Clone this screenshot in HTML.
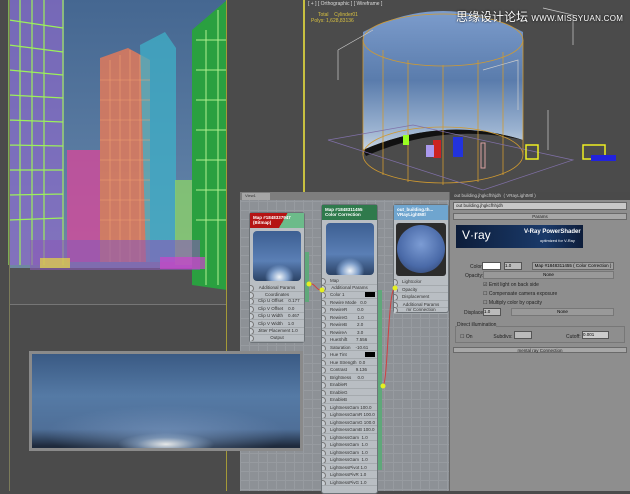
<!DOCTYPE html>
<html><head><meta charset="utf-8"><style>
*{margin:0;padding:0;box-sizing:border-box}
body{width:630px;height:491px;overflow:hidden;background:#4b4b4b;position:relative;font-family:"Liberation Sans",sans-serif}
.a{position:absolute}
.t{font-size:5px;color:#222;white-space:nowrap}
.node{position:absolute;background:#b9bec3;border:1px solid #6d7378;border-radius:3px}
.row{position:absolute;left:0;right:0;height:7.5px;border-bottom:1px solid #a5aaae;font-size:4.5px;color:#333;padding-left:8px;line-height:7px;white-space:nowrap;overflow:hidden}
.row:before{content:"";position:absolute;left:-3px;top:1px;width:5px;height:5px;border-radius:50%;background:#c8cdd2;border:1px solid #777}
</style></head><body>
<!-- left viewport -->
<div class="a" style="left:9px;top:0;width:218px;height:305px;background:linear-gradient(#456791,#5d7ea4 60%,#6f88a2 85%)"></div>
<div class="a" style="left:9px;top:268px;width:218px;height:37px;background:#525252"></div>
<svg class="a" style="left:0;top:0" width="230" height="305">
<rect x="9" y="0" width="55" height="265" fill="#8a6ac8" opacity=".7"/>
<g stroke="#9cf05a" stroke-width="1.2" fill="none">
<path d="M9 0V265M63 0V265M9 20L63 28M9 45L63 52M9 70L63 75M9 95L63 98M9 120L63 122M9 145L63 146M9 170L63 170M9 195L63 194M9 220L63 218M20 0V265M32 0V265M44 0V265"/></g>
<rect x="67" y="150" width="33" height="112" fill="#d24a9a" opacity=".8"/>
<polygon points="100,58 128,48 150,60 150,262 100,262" fill="#e07a5a" opacity=".85"/>
<polygon points="140,45 165,32 176,48 176,262 146,262" fill="#3fb0c8" opacity=".75"/>
<g stroke="#f0a070" stroke-width=".6"><path d="M100 80H150M100 100H150M100 120H150M100 140H150M100 160H150M100 180H150M100 200H150M100 220H150M110 60V262M120 55V262M130 50V262M140 55V262"/></g>
<rect x="175" y="180" width="18" height="85" fill="#8ad06a" opacity=".8"/>
<polygon points="192,30 227,0 227,290 192,285" fill="#2aa040"/>
<g stroke="#b0f090" stroke-width="1"><path d="M196 40H227M196 70H227M196 100H227M196 130H227M196 160H227M196 190H227M196 220H227M206 30V285M218 10V285"/></g>
<rect x="30" y="240" width="170" height="30" fill="#8a5ab8" opacity=".6"/>
<rect x="160" y="257" width="45" height="12" fill="#cc44cc" opacity=".7"/>
<rect x="40" y="258" width="30" height="10" fill="#e8d840" opacity=".7"/>
<line x1="9" y1="305" x2="227" y2="305" stroke="#9a9a9a"/>
</svg>
<div class="a" style="left:9px;top:0;width:1px;height:491px;background:#7b7b5a"></div>
<div class="a" style="left:226px;top:0;width:1px;height:491px;background:#a49a38"></div>
<!-- top right viewport -->
<div class="a" style="left:303px;top:0;width:2px;height:193px;background:#c8c040"></div>
<div class="a t" style="left:308px;top:1px;color:#ddd;font-size:5px">[ + ] [ Orthographic ] [ Wireframe ]</div>
<div class="a t" style="left:311px;top:12px;color:#d8c040;font-size:5px;line-height:6px">&nbsp;&nbsp;&nbsp;&nbsp;&nbsp;Total&nbsp;&nbsp;&nbsp;&nbsp;Cylinder01<br>Polys: 1,628,83136</div>
<svg class="a" style="left:303px;top:0" width="327" height="193">
<defs><linearGradient id="cy" x1="0" y1="0" x2="0" y2="1"><stop offset="0" stop-color="#7c9ccc"/><stop offset=".5" stop-color="#5a7cac"/><stop offset=".85" stop-color="#9ab2d0"/><stop offset="1" stop-color="#c8d4e0"/></linearGradient></defs>
<path d="M60 32 Q140 -10 220 32 V140 Q140 115 60 150Z" fill="url(#cy)"/>
<path d="M60 150 Q140 115 220 140 Q140 122 63 156Z" fill="#111"/>
<g fill="none" stroke="#d09a30" stroke-width=".8"><ellipse cx="140" cy="40" rx="80" ry="26"/><ellipse cx="140" cy="155" rx="80" ry="28"/><path d="M60 40V155M220 40V155M80 50V175M105 60V182M140 65V185M175 60V182M200 52V175"/></g>
<g stroke="#ccc" stroke-width=".7" fill="none"><path d="M35 50L70 30M35 50V80M180 70L215 60V110M240 8L270 15V45M245 110V150"/></g>
<path d="M25 140L110 125L270 160L180 190Z" fill="none" stroke="#8070a8" stroke-width=".7"/>
<rect x="100" y="135" width="6" height="10" fill="#9f2"/><rect x="130" y="140" width="8" height="18" fill="#cc2222"/><rect x="150" y="137" width="10" height="20" fill="#2233dd"/><rect x="123" y="145" width="8" height="12" fill="#aa99ee"/><rect x="178" y="143" width="4" height="25" fill="none" stroke="#d8a0a0"/><rect x="223" y="145" width="12" height="14" fill="none" stroke="#ee2" stroke-width="1.5"/><rect x="280" y="145" width="22" height="14" fill="none" stroke="#ee2" stroke-width="1.5"/><rect x="288" y="155" width="25" height="6" fill="#22d"/>
</svg>
<div class="a" style="left:456px;top:8px;color:#fff;font-size:12px;font-family:'Liberation Sans','Noto Sans CJK SC',sans-serif;white-space:nowrap;text-shadow:0 0 2px #000">思缘设计论坛 <span style="font-size:8px;letter-spacing:.3px">WWW.MISSYUAN.COM</span></div>
<!-- slate -->
<div class="a" style="left:240px;top:192px;width:210px;height:299px;background-color:#8d9196;background-image:linear-gradient(#979ba0 1px,transparent 1px),linear-gradient(90deg,#979ba0 1px,transparent 1px);background-size:9px 9px"></div>
<div class="a" style="left:240px;top:192px;width:210px;height:8px;background:#7e7e7e"></div>
<div class="a" style="left:242px;top:193px;width:28px;height:7px;background:#a6a6a6;font-size:4px;color:#333;padding-left:3px">View1</div>
<!-- node1 -->
<div class="node" style="left:249px;top:212px;width:56px;height:131px">
<div class="a" style="left:0;top:0;width:54px;height:15px;background:linear-gradient(120deg,#b51414 60%,#6cbb8a 60%);font-size:4.5px;color:#fff;padding:2px 3px;font-weight:bold;white-space:nowrap">Map #1848337947<br>(Bitmap)</div>
<div class="a" style="left:3px;top:18px;width:48px;height:50px;border-radius:4px;background:radial-gradient(ellipse 30% 25% at 55% 92%,#f0f4f8,#7c9cc8 60%,transparent),linear-gradient(#3d5f92,#5a7fb5 60%,#2b4265)"></div>
<div class="row" style="top:71px;text-align:center;padding:0">Additional Params</div>
<div class="row" style="top:78px;text-align:center;padding:0">Coordinates</div>
<div class="row" style="top:84px">Clip U Offset&nbsp;&nbsp;&nbsp;&nbsp;0.177</div>
<div class="row" style="top:92px">Clip V Offset&nbsp;&nbsp;&nbsp;&nbsp;0.0</div>
<div class="row" style="top:99px">Clip U Width&nbsp;&nbsp;&nbsp;&nbsp;0.467</div>
<div class="row" style="top:107px">Clip V Width&nbsp;&nbsp;&nbsp;&nbsp;1.0</div>
<div class="row" style="top:114px">Jitter Placement 1.0</div>
<div class="row" style="top:121px;text-align:center;padding:0">Output</div>
</div>
<div class="a" style="left:305px;top:252px;width:4px;height:50px;background:#5fa87a"></div>
<!-- node2 -->
<div class="node" style="left:321px;top:204px;width:57px;height:290px">
<div class="a" style="left:0;top:0;width:55px;height:15px;background:#2f7a4c;font-size:4.5px;color:#fff;padding:2px 3px;font-weight:bold;white-space:nowrap">Map #1848311455<br>Color Correction</div>
<div class="a" style="left:4px;top:18px;width:48px;height:52px;border-radius:4px;background:radial-gradient(ellipse 30% 25% at 50% 92%,#f0f4f8,#7c9cc8 60%,transparent),linear-gradient(#3d5f92,#5a7fb5 60%,#2b4265)"></div>
<div class="row" style="top:72px">Map</div>
<div class="row" style="top:79px;text-align:center;padding:0">Additional Params</div>
<div class="row" style="top:86px">Color 1</div><div class="row" style="top:93.5px">Rewire Mode&nbsp;&nbsp;&nbsp;0.0</div><div class="row" style="top:101px">RewireR&nbsp;&nbsp;&nbsp;&nbsp;&nbsp;&nbsp;&nbsp;&nbsp;0.0</div><div class="row" style="top:108.5px">RewireG&nbsp;&nbsp;&nbsp;&nbsp;&nbsp;&nbsp;&nbsp;&nbsp;1.0</div><div class="row" style="top:116px">RewireB&nbsp;&nbsp;&nbsp;&nbsp;&nbsp;&nbsp;&nbsp;&nbsp;2.0</div><div class="row" style="top:123.5px">RewireA&nbsp;&nbsp;&nbsp;&nbsp;&nbsp;&nbsp;&nbsp;&nbsp;3.0</div><div class="row" style="top:131px">HueShift&nbsp;&nbsp;&nbsp;&nbsp;&nbsp;&nbsp;&nbsp;7.556</div><div class="row" style="top:138.5px">Saturation&nbsp;&nbsp;&nbsp;&nbsp;-10.61</div><div class="row" style="top:146px">Hue Tint</div><div class="row" style="top:153.5px">Hue Strength&nbsp;&nbsp;0.0</div><div class="row" style="top:161px">Contrast&nbsp;&nbsp;&nbsp;&nbsp;&nbsp;&nbsp;&nbsp;9.136</div><div class="row" style="top:168.5px">Brightness&nbsp;&nbsp;&nbsp;&nbsp;&nbsp;0.0</div><div class="row" style="top:176px">EnableR</div><div class="row" style="top:183.5px">EnableG</div><div class="row" style="top:191px">EnableB</div><div class="row" style="top:198.5px">LightnessGam 100.0</div><div class="row" style="top:206px">LightnessGamR 100.0</div><div class="row" style="top:213.5px">LightnessGamG 100.0</div><div class="row" style="top:221px">LightnessGamB 100.0</div><div class="row" style="top:228.5px">LightnessGam&nbsp;&nbsp;1.0</div><div class="row" style="top:236px">LightnessGam&nbsp;&nbsp;1.0</div><div class="row" style="top:243.5px">LightnessGam&nbsp;&nbsp;1.0</div><div class="row" style="top:251px">LightnessGam&nbsp;&nbsp;1.0</div><div class="row" style="top:258.5px">LightnessPivot&nbsp;1.0</div><div class="row" style="top:266px">LightnessPivR 1.0</div><div class="row" style="top:273.5px">LightnessPivG 1.0</div>
<div class="a" style="left:43px;top:87px;width:10px;height:5px;background:#000"></div><div class="a" style="left:43px;top:147px;width:10px;height:5px;background:#000"></div>
</div>
<div class="a" style="left:378px;top:290px;width:4px;height:180px;background:#5fa87a"></div>
<!-- node3 -->
<div class="node" style="left:393px;top:204px;width:56px;height:109px">
<div class="a" style="left:0;top:0;width:54px;height:15px;background:#6fa5cf;font-size:4.5px;color:#fff;padding:2px 3px;font-weight:bold;white-space:nowrap">out_building.th...<br>VRayLightMtl</div>
<div class="a" style="left:2px;top:18px;width:50px;height:53px;background:#2c2c2c;border-radius:3px"><div style="margin:2px auto;width:48px;height:48px;border-radius:50%;background:radial-gradient(circle at 50% 40%,#7c9cd4,#4a6aa8 60%,#2a3a60)"></div></div>
<div class="row" style="top:73px">Lightcolor</div><div class="row" style="top:80.5px">Opacity</div><div class="row" style="top:88px">Displacement</div><div class="row" style="top:95.5px;text-align:center;padding:0">Additional Params</div><div class="row" style="top:101px;text-align:center;padding:0">mr Connection</div>
</div>
<svg class="a" style="left:240px;top:192px" width="210" height="299"><path d="M69 92C75 90 76 99 82 98M143 194C148 190 148 95 155 96" stroke="#d04040" fill="none" stroke-width="1"/><circle cx="69" cy="92" r="2.5" fill="#e4f020"/><circle cx="82" cy="98" r="2.5" fill="#e4f020"/><circle cx="143" cy="194" r="2.5" fill="#e4f020"/><circle cx="155" cy="96" r="2.5" fill="#e4f020"/></svg>
<!-- panorama (on top) -->
<div class="a" style="left:29px;top:351px;width:274px;height:100px;background:#8a8a8a;padding:3px"><div style="width:100%;height:100%;background:radial-gradient(ellipse 18% 12% at 50% 96%,#e6e8e8,rgba(140,165,195,.6) 60%,transparent),radial-gradient(ellipse 45% 30% at 50% 85%,rgba(120,150,190,.7),transparent),linear-gradient(#3a5a84,#557aa5 45%,#4f6f98 80%,#1e2a3c 98%)"></div></div>
<!-- props panel -->
<div class="a" style="left:449px;top:192px;width:181px;height:299px;background:#8e8e8e;border-left:1px solid #666"></div>
<div class="a" style="left:450px;top:192px;width:180px;height:8px;background:#4a4a4a;font-size:4.5px;color:#ccc;padding:1px 4px;white-space:nowrap">out building.jhgkcfhhjdh&nbsp;&nbsp;( VRayLightMtl )</div>
<div class="a" style="left:453px;top:202px;width:174px;height:8px;background:#c8c8c8;border:1px solid #666;font-size:4.5px;color:#222;padding-left:2px">out building.jhgkcfhhjdh</div>
<div class="a" style="left:453px;top:213px;width:174px;height:7px;background:#a8a8a8;border:1px solid #6a6a6a;font-size:4.5px;text-align:center;color:#222">Params</div>
<div class="a" style="left:456px;top:225px;width:127px;height:23px;background:linear-gradient(90deg,#0d1d3a,#1a3a6a 70%,#0d1d3a);color:#fff;white-space:nowrap">
<span class="a" style="left:6px;top:3px;font-size:12px">V·ray</span>
<span class="a" style="left:68px;top:4px;font-size:6px;font-weight:bold">V-Ray PowerShader</span>
<span class="a" style="left:84px;top:13px;font-size:4px">optimized for V-Ray</span></div>
<div class="a t" style="left:470px;top:264px">Color:</div>
<div class="a" style="left:482px;top:262px;width:19px;height:8px;background:#fff;border:1px solid #555"></div>
<div class="a" style="left:504px;top:262px;width:18px;height:8px;background:#bbb;border:1px solid #555;font-size:4.5px">1.0</div>
<div class="a" style="left:532px;top:262px;width:82px;height:8px;background:#a0a0a0;border:1px solid #666;font-size:4.5px;text-align:center;white-space:nowrap">Map #1848311455 ( Color Correction )</div>
<div class="a t" style="left:465px;top:273px">Opacity:</div>
<div class="a" style="left:483px;top:271px;width:131px;height:8px;background:#999;border:1px solid #777;font-size:4.5px;text-align:center">None</div>
<div class="a t" style="left:483px;top:282px">☑ Emit light on back side</div>
<div class="a t" style="left:483px;top:291px">☐ Compensate camera exposure</div>
<div class="a t" style="left:483px;top:300px">☐ Multiply color by opacity</div>
<div class="a t" style="left:464px;top:310px">Displace:</div>
<div class="a" style="left:483px;top:308px;width:18px;height:8px;background:#bbb;border:1px solid #555;font-size:4.5px">1.0</div>
<div class="a" style="left:511px;top:308px;width:103px;height:8px;background:#999;border:1px solid #777;font-size:4.5px;text-align:center">None</div>
<div class="a" style="left:455px;top:326px;width:170px;height:17px;border:1px solid #777"></div>
<div class="a t" style="left:457px;top:322px;background:#8e8e8e">Direct illumination</div>
<div class="a t" style="left:460px;top:334px">☐ On&nbsp;&nbsp;&nbsp;&nbsp;&nbsp;&nbsp;&nbsp;&nbsp;&nbsp;&nbsp;&nbsp;&nbsp;&nbsp;&nbsp;&nbsp;Subdivs:</div>
<div class="a" style="left:514px;top:331px;width:18px;height:8px;background:#bbb;border:1px solid #555"></div>
<div class="a t" style="left:566px;top:334px">Cutoff:</div>
<div class="a" style="left:582px;top:331px;width:27px;height:8px;background:#ccc;border:1px solid #555;font-size:4.5px">0.001</div>
<div class="a" style="left:453px;top:347px;width:174px;height:6px;background:#a8a8a8;border:1px solid #6a6a6a;font-size:4.5px;text-align:center;color:#222">mental ray Connection</div>
</body></html>
